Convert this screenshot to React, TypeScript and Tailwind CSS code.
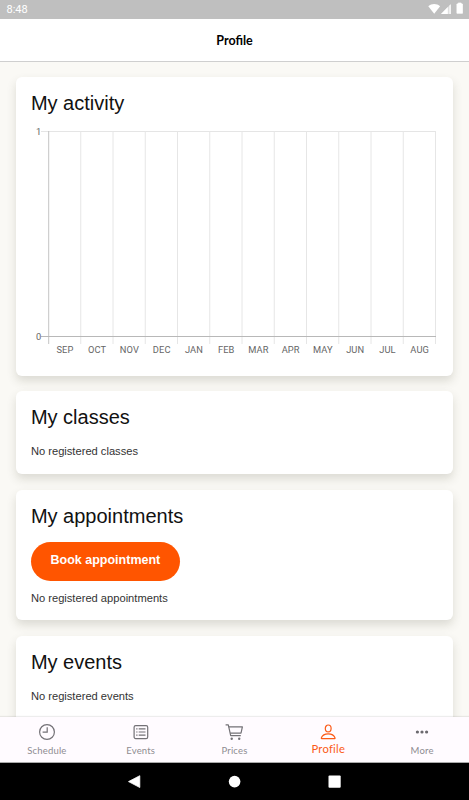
import React from 'react';

const months = ['SEP', 'OCT', 'NOV', 'DEC', 'JAN', 'FEB', 'MAR', 'APR', 'MAY', 'JUN', 'JUL', 'AUG'];

const CHART_LEFT = 17.5;
const CHART_STEP = 32.25;

interface CardProps {
  title: string;
  className: string;
  children: React.ReactNode;
}

const Card: React.FC<CardProps> = ({ title, className, children }) => (
  <section
    className={`shrink-0 rounded-[6px] bg-white px-[15px] pt-[14px] shadow-[0_5px_10px_rgba(70,70,50,0.17)] ${className}`}
  >
    <h2 className="font-['Liberation_Sans',sans-serif] text-[20px] leading-6 text-[#111]">{title}</h2>
    {children}
  </section>
);

const EmptyText: React.FC<{ className: string; children: React.ReactNode }> = ({ className, children }) => (
  <p className={`font-['Liberation_Sans',sans-serif] text-[11.15px] leading-4 text-[#333] ${className}`}>{children}</p>
);

const ActivityChart = () => (
  <svg width="406" height="240" viewBox="0 0 406 240" className="block">
    {/* horizontal grid */}
    <path d="M10 16.5H405" stroke="#e5e5e5" />
    {/* month separators */}
    {months.map((month, i) => (
      <path
        key={month}
        d={`M${CHART_LEFT + CHART_STEP * (i + 1)} 16V229`}
        stroke="#e6e6e6"
      />
    ))}
    <path d="M17.7 16V229" stroke="#c4c4c4" />
    <path d="M10 221.5H405" stroke="#b8b8b8" />
    <g fill="#666" fontSize="9.3" fontFamily="Roboto, sans-serif" textAnchor="middle">
      <text x="7.5" y="20">1</text>
      <text x="7.5" y="224.5">0</text>
      {months.map((month, i) => (
        <text key={month} x={CHART_LEFT + CHART_STEP * (i + 0.5) + 0.3} y="238" letterSpacing="0.1">{month}</text>
      ))}
    </g>
  </svg>
);

const ClockIcon = () => (
  <svg width="18" height="18" viewBox="0 0 18 18" fill="none" stroke="#737176" strokeWidth="1.2">
    <circle cx="9" cy="9" r="7.4" />
    <path d="M9.2 4.2V9.1H4.6" />
  </svg>
);

const ListIcon = () => (
  <svg width="18" height="18" viewBox="0 0 18 18" fill="none" stroke="#737176" strokeWidth="1.2">
    <rect x="2.1" y="2.6" width="13.6" height="13" rx="1.6" />
    <path d="M6.7 5.8H13.5M6.7 9H13.5M6.7 12.2H13.5" />
    <path d="M4.2 5.8H5.5M4.2 9H5.5M4.2 12.2H5.5" />
  </svg>
);

const CartIcon = () => (
  <svg width="20" height="18" viewBox="0 0 20 18" fill="none" stroke="#737176" strokeWidth="1.2" strokeLinejoin="round">
    <path d="M1.6 1.9H4.3L6.7 12.6H16.8" />
    <path d="M4.8 3.9H18.4L17 10.2H6.2" />
    <circle cx="7.7" cy="15.7" r="1.2" fill="#737176" stroke="none" />
    <circle cx="15.2" cy="15.7" r="1.2" fill="#737176" stroke="none" />
  </svg>
);

const PersonIcon = () => (
  <svg width="18" height="18" viewBox="0 0 18 18" fill="none" stroke="#fb5a16" strokeWidth="1.2">
    <ellipse cx="9.2" cy="5.4" rx="2.9" ry="3.4" />
    <path d="M2.7 15.6C2.3 15.6 2.2 15.2 2.4 14.7C3.3 12.2 5.9 10.8 9.2 10.8S15.1 12.2 16 14.7C16.2 15.2 16.1 15.6 15.7 15.6Z" />
  </svg>
);

const MoreIcon = () => (
  <svg width="18" height="18" viewBox="0 0 18 18" fill="#6b696e">
    <circle cx="4.4" cy="9" r="1.6" />
    <circle cx="9" cy="9" r="1.6" />
    <circle cx="13.6" cy="9" r="1.6" />
  </svg>
);

const tabs = [
  { label: 'Schedule', icon: ClockIcon },
  { label: 'Events', icon: ListIcon },
  { label: 'Prices', icon: CartIcon },
  { label: 'Profile', icon: PersonIcon, active: true },
  { label: 'More', icon: MoreIcon },
];

const StatusBar = () => (
  <div className="flex h-[19px] shrink-0 items-center justify-between bg-[#bfbfbf] pr-[5px] pl-[6.5px]">
    <span className="font-[Roboto,sans-serif] text-[11px] leading-[19px] text-white">8:48</span>
    <svg width="36" height="19" viewBox="0 0 36 19" fill="#fff">
      <path d="M0.3 6.2C3.7 3.2 8.7 3.2 12.1 6.2L6.2 13.8Z" />
      <path d="M13 14L22.7 4.2V14Z" fillOpacity="0.5" />
      <path d="M13 14L19.8 7.1V14ZM21.5 5.4L22.7 4.2V14H21.5Z" />
      <path d="M28.9 4H30.2V3H33.2V4H34.5V13.3H28.9Z" stroke="#fff" strokeWidth="0.7" strokeLinejoin="round" />
    </svg>
  </div>
);

const TabBar = () => (
  <nav className="z-10 grid h-[46px] shrink-0 grid-cols-5 bg-[#fffbff] border-b border-[#aaa] shadow-[0_-1px_1px_rgba(0,0,0,0.07)]">
    {tabs.map(({ label, icon: Icon, active }) => (
      <div key={label} className="flex flex-col items-center pt-[6px]">
        <Icon />
        {active ? (
          <span className="font-[Lato,sans-serif] text-[11.2px] leading-[15px] tracking-[0.25px] text-[#fb5a16]">{label}</span>
        ) : (
          <span className="pt-px font-[Lato,sans-serif] text-[9.5px] leading-[17px] tracking-[0.16px] text-[#8e8c91]">{label}</span>
        )}
      </div>
    ))}
  </nav>
);

const SystemNav = () => (
  <div className="flex h-[37px] shrink-0 items-center justify-center bg-black">
    <svg width="214" height="14" viewBox="0.2 0.2 214 14" fill="#fff">
      <path d="M12 0.9V12.7L0.7 6.8Z" stroke="#fff" strokeWidth="0.8" strokeLinejoin="round" />
      <circle cx="106.8" cy="6.8" r="5.8" />
      <rect x="200.7" y="0.7" width="12.2" height="12.2" rx="1" />
    </svg>
  </div>
);

const App = () => (
  <div className="flex h-[800px] w-[469px] flex-col overflow-hidden bg-[#faf9f5]">
    <StatusBar />
    <header className="flex h-[43px] shrink-0 items-center justify-center border-b border-[#cfcfcf] bg-white pt-[2px]">
      <h1 className="font-[Lato,sans-serif] text-[12.5px] font-bold text-black">Profile</h1>
    </header>

    <main className="flex min-h-0 flex-1 flex-col gap-[15.6px] overflow-hidden pt-[15.3px] pr-[15.6px] pl-[15.9px]">
      <Card title="My activity" className="h-[298.4px]">
        <ActivityChart />
      </Card>

      <Card title="My classes" className="h-[82.7px]">
        <EmptyText className="mt-[14px]">No registered classes</EmptyText>
      </Card>

      <Card title="My appointments" className="h-[130.5px]">
        <button className="mt-[14px] block h-[39px] w-[149px] rounded-full bg-[#ff5500] pb-[2px] font-['Liberation_Sans',sans-serif] text-[12.5px] font-bold text-white">
          Book appointment
        </button>
        <EmptyText className="mt-[9px]">No registered appointments</EmptyText>
      </Card>

      <Card title="My events" className="h-[100px]">
        <EmptyText className="mt-[14px]">No registered events</EmptyText>
      </Card>
    </main>

    <TabBar />
    <SystemNav />
  </div>
);

export default App;
